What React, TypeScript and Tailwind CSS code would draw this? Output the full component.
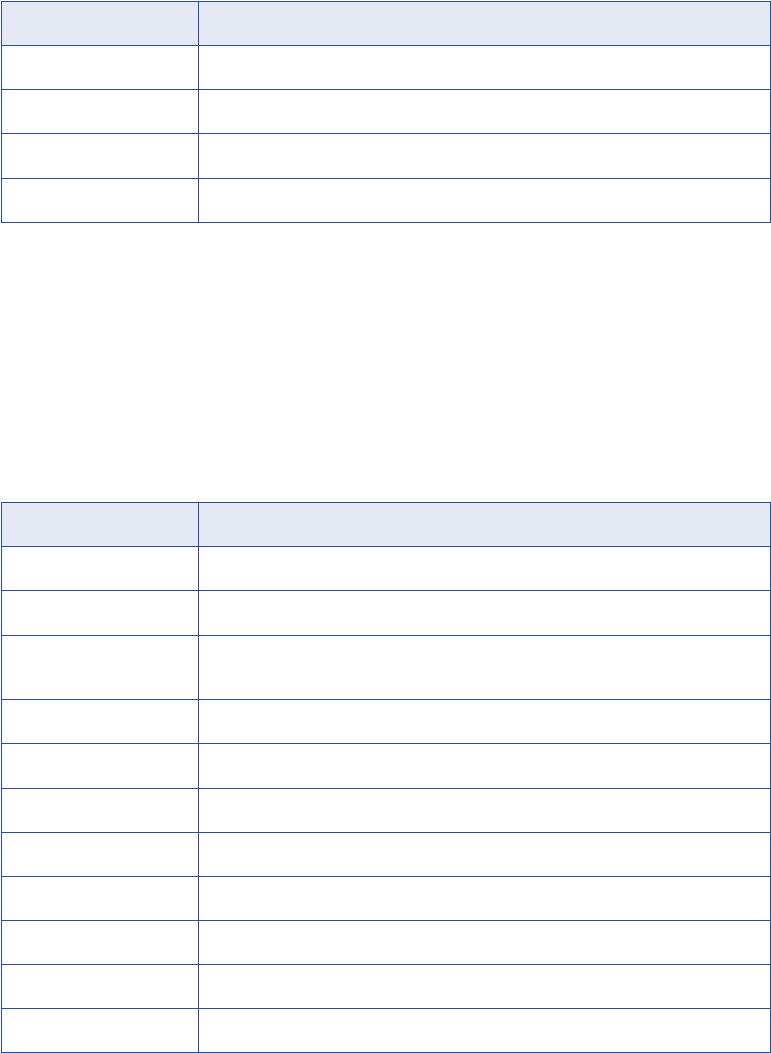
import React from 'react';

const Row = ({ head, h }: { head?: boolean; h: string }) => (
  <div className={`grid grid-cols-[197px_1fr] border-b border-[#2b4c9b] ${h} ${head ? 'bg-[#e4e9f4]' : ''}`}>
    <div className="border-r border-[#2b4c9b]"></div>
    <div></div>
  </div>
);

// row heights, border included
const first = ['h-[44px]', 'h-[44px]', 'h-[45px]', 'h-[44px]'];
const second = ['h-[44px]', 'h-[45px]', 'h-[64px]', 'h-[44px]', 'h-[45px]', 'h-[44px]', 'h-[44px]', 'h-[44px]', 'h-[44px]', 'h-[44px]', 'h-[44px]'];

const Grid = ({ rows }: { rows: string[] }) => (
  <div className="border-t border-l border-r border-[#2b4c9b] bg-white">
    <Row head h="h-[44px]" />
    {rows.map((h, i) => (
      <Row key={i} h={h} />
    ))}
  </div>
);

export default function App() {
  return (
    <div className="bg-white min-h-[1053px] pt-px pl-px" style={{ fontFamily: '"Liberation Sans", Arial, sans-serif' }}>
      <Grid rows={first} />
      <div className="h-[279px]"></div>
      <Grid rows={second} />
    </div>
  );
}
